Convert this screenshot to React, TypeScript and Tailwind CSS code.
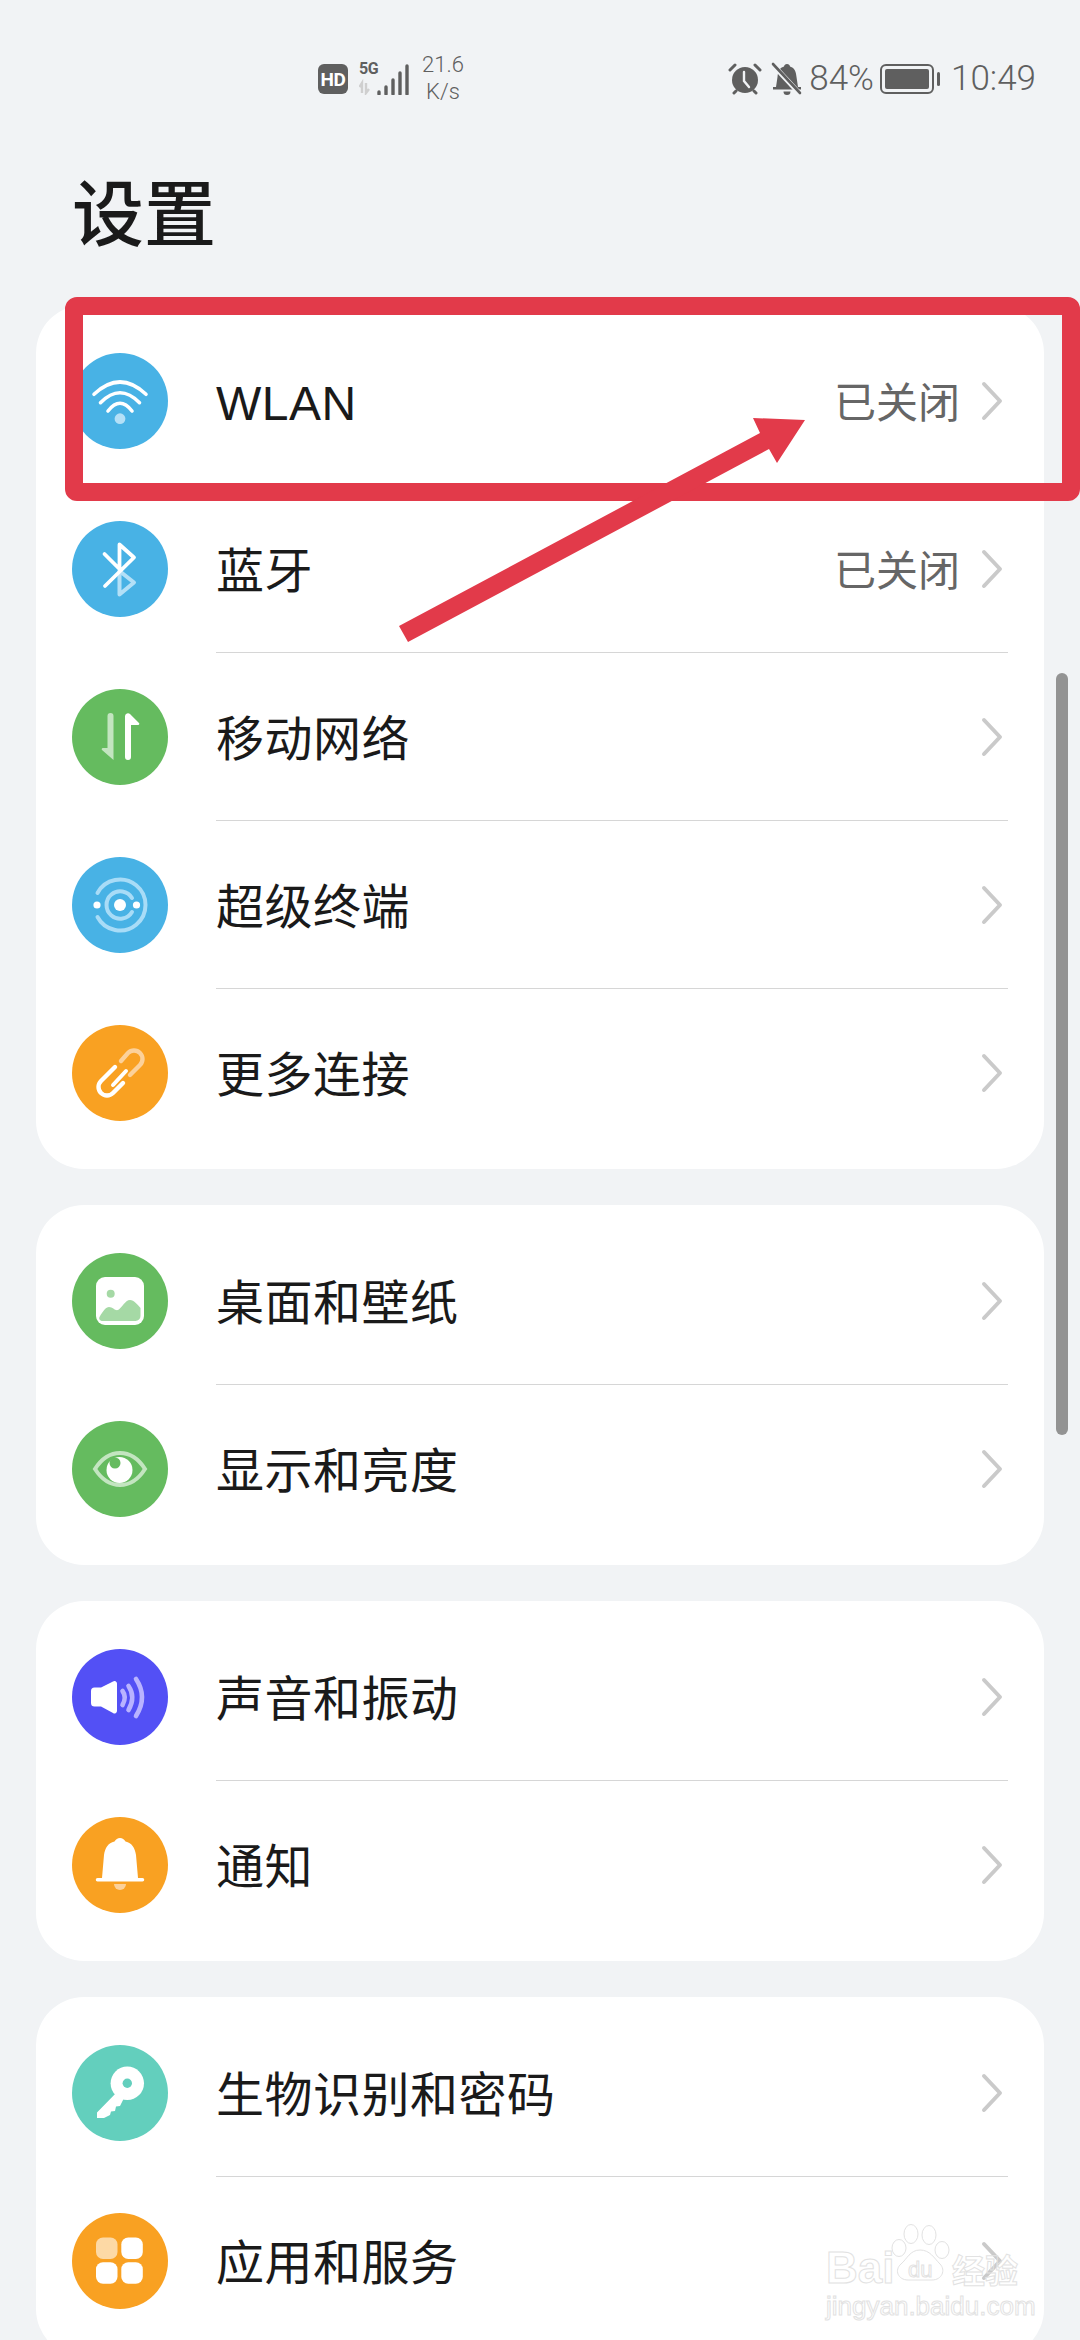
import React from "react";

const FONT = "font-['Noto_Sans_CJK_SC','Noto_Sans',sans-serif]";

function Circle({ bg, children }: { bg: string; children: React.ReactNode }) {
  return (
    <div className={`w-[96px] h-[96px] rounded-full shrink-0 ${bg}`}>
      <svg viewBox="0 0 96 96" width="96" height="96" fill="none">
        {children}
      </svg>
    </div>
  );
}

const Wifi = () => (
  <Circle bg="bg-[#48b2e5]">
    <g stroke="#fff" strokeWidth="3.6" strokeLinecap="round">
      <path d="M22 41.3Q48 16.7 74 41.3" />
      <path d="M28.5 49.7Q48 29.7 67.5 49.7" />
      <path d="M36 58Q48 42.6 60 58" />
    </g>
    <circle cx="48" cy="65.7" r="5.4" fill="#b3e0f7" />
  </Circle>
);
const Bluetooth = () => (
  <Circle bg="bg-[#48b2e5]">
    <path d="M47.5 50V73.500L62 61.500Z" stroke="#b3e0f7" strokeWidth="4" strokeLinejoin="round" />
    <path d="M32.5 33L47.5 48V23.500L62 36.500L33 65" stroke="#fff" strokeWidth="3.800" strokeLinecap="round" strokeLinejoin="round" />
  </Circle>
);
const Mobile = () => (
  <Circle bg="bg-[#65bb5f]">
    <path d="M35.5 27a3 3 0 0 1 6 0v44l-11.5-10a1.2 1.2 0 0 1 .8-2h4.7z" fill="#c3e5c0" />
    <path d="M53 27a3 3 0 0 1 5-2l9 9a1.2 1.2 0 0 1-.8 2H59v32a3 3 0 0 1-6 0z" fill="#fff" />
  </Circle>
);
const Device = () => (
  <Circle bg="bg-[#48b2e5]">
    <g stroke="#a8dcf7" strokeWidth="4" strokeLinecap="round">
      <path d="M25.5 36A25.5 25.5 0 1 1 25.5 60" />
      <path d="M60 41A13.7 13.7 0 1 0 60 55" />
    </g>
    <circle cx="48" cy="48" r="6" fill="#fff" />
    <circle cx="25" cy="48" r="3.6" fill="#fff" />
    <circle cx="64.5" cy="48" r="3.6" fill="#fff" />
  </Circle>
);
const LinkIcon = () => (
  <Circle bg="bg-[#f9a122]">
    <path d="M58 50L68 40a8.300 8.300 0 0 0-12-12L49 36" stroke="#fcd19a" strokeWidth="4.400" strokeLinecap="round" />
    <path d="M43 42L29 56a8.300 8.300 0 0 0 12 12L51 58" stroke="#fff" strokeWidth="4.400" strokeLinecap="round" />
    <path d="M41 60L54 46" stroke="#fff" strokeWidth="4" strokeLinecap="round" />
  </Circle>
);
const Wallpaper = () => (
  <Circle bg="bg-[#65bb5f]">
    <rect x="24" y="24" width="48" height="48" rx="9" fill="#fff" />
    <circle cx="38.7" cy="40.7" r="4" fill="#a5d9a5" />
    <path d="M27.5 64C31 58 34 54 37 54C41 54 43 58 46 57C50 55 53 47 58 47C62 47 66 52 68.5 55V63A5 5 0 0 1 63.5 68H31C28 68 26.5 66 27.5 64Z" fill="#a5d9a5" />
  </Circle>
);
const Eye = () => (
  <Circle bg="bg-[#65bb5f]">
    <path d="M23 48C30 37 38 32 48 32C58 32 66 37 73 48C66 59 58 64 48 64C38 64 30 59 23 48Z" stroke="#c3e5c0" strokeWidth="4" />
    <circle cx="47.5" cy="49" r="13" fill="#fff" />
    <circle cx="43" cy="42" r="5.5" fill="#65bb5f" />
  </Circle>
);
const Sound = () => (
  <Circle bg="bg-[#5350f5]">
    <path d="M19 42a3.5 3.5 0 0 1 3.5-3.5H29L41 32.5a2.5 2.5 0 0 1 4 2V62a2.5 2.5 0 0 1-4 2L29 57.500H22.500a3.500 3.500 0 0 1-3.500-3.500z" fill="#fff" />
    <g stroke="#b9b3ff" strokeWidth="4.600" strokeLinecap="round">
      <path d="M50.500 42Q55 48 50.500 56" />
      <path d="M56.500 37Q64 48 56.500 61" />
      <path d="M64 30Q76 48 64 67" />
    </g>
  </Circle>
);
const Bell = () => (
  <Circle bg="bg-[#f9a122]">
    <path d="M42 67h12a6 6 0 0 1-12 0z" fill="#fcd19a" />
    <path d="M48 21C50.500 21 52 22.500 53.500 24.500C60 26 63 31 64 38L66 61H70.500a1.700 1.700 0 0 1 0 3.500H25.500a1.700 1.700 0 0 1 0-3.500H30L32 38C33 31 36 26 42.500 24.500C44 22.500 45.500 21 48 21Z" fill="#fff" />
  </Circle>
);
const Key = () => (
  <Circle bg="bg-[#63cfbd]">
    <path d="M46 46L25 67.500V73H32L38 70L39 66.500L43 66L44 61.500L48 61L53 51Z" fill="#fff" />
    <circle cx="55.300" cy="38.300" r="16.700" fill="#fff" />
    <circle cx="55.300" cy="38.300" r="4.700" fill="#63cfbd" />
  </Circle>
);
const Apps = () => (
  <Circle bg="bg-[#f9a122]">
    <rect x="24" y="24.500" width="21.500" height="21.500" rx="7" fill="#fdd9a5" />
    <rect x="49.300" y="24.500" width="21.500" height="21.500" rx="7" fill="#fff" />
    <rect x="24" y="49.300" width="21.500" height="21.500" rx="7" fill="#fff" />
    <rect x="49.300" y="49.300" width="21.500" height="21.500" rx="7" fill="#fff" />
  </Circle>
);

const Chevron = () => (
  <svg width="22" height="40" viewBox="0 0 22 40" fill="none" className="shrink-0">
    <path d="M3 3L19 20L3 37" stroke="#cacaca" strokeWidth="4" strokeLinecap="round" strokeLinejoin="round" />
  </svg>
);

function Row({ icon, label, value, last }: { icon: React.ReactNode; label: string; value?: string; last?: boolean }) {
  return (
    <div className="flex items-center h-[168px] pl-[36px] pr-[36px]">
      {icon}
      <div className={`flex-1 h-full ml-[48px] flex items-center pr-[5px] ${last ? "" : "border-b-[1.5px] border-[#d6d6d6]"}`}>
        <span className="flex-1 pt-[6px] text-[48px] leading-[60px] tracking-[0.5px] text-[#1a1a1a] font-['Liberation_Sans','Noto_Sans_CJK_SC',sans-serif]">{label}</span>
        {value && <span className="pb-[2px] text-[42px] leading-[50px] text-[#666666] mr-[21px]">{value}</span>}
        <Chevron />
      </div>
    </div>
  );
}

function Card({ children }: { children: React.ReactNode }) {
  return <div className="bg-white rounded-[48px] py-[12px] mx-[36px] mb-[36px]">{children}</div>;
}

function StatusBar() {
  return (
    <div className="h-[158px] flex items-center pl-[318px] pr-[44px] text-[#5f5f5f] font-['Roboto',sans-serif] font-light">
      <div className="w-[30px] h-[30px] rounded-[6px] bg-[#5f5f5f] text-white text-[19px] font-bold flex items-center justify-center leading-none tracking-[-0.5px]">HD</div>
      <div className="ml-[11px] w-[52px] h-[32px] relative">
        <span className="absolute left-0 top-[-3px] text-[16px] font-bold leading-[18px] tracking-[-0.5px]">5G</span>
        <svg viewBox="0 0 52 32" width="52" height="32" className="absolute left-0 top-0" fill="none">
          <path d="M3 30V20L0.500 24M7 20V30L10 26" stroke="#cfcfcf" strokeWidth="2.400" />
          <g stroke="#5f5f5f" strokeWidth="3.400" strokeLinecap="round">
            <path d="M20 31V29" />
            <path d="M27 31V24" />
            <path d="M34 31V17" />
            <path d="M41 31V10" />
            <path d="M48 31V3" />
          </g>
        </svg>
      </div>
      <div className="ml-[8px] w-[48px] flex flex-col items-center text-[22px] leading-[27px] pb-[2px]">
        <span>21.6</span>
        <span>K/s</span>
      </div>
      <div className="flex-1" />
      <svg viewBox="0 0 34 34" width="34" height="34" fill="none" className="shrink-0">
        <circle cx="17" cy="18" r="13" fill="#5f5f5f" />
        <path d="M16 10V19L21 25" stroke="#f1f3f5" strokeWidth="2.400" strokeLinecap="round" />
        <path d="M2 8L7 3M32 8L27 3M6 31L8 29M28 31L26 29" stroke="#5f5f5f" strokeWidth="3" strokeLinecap="round" />
      </svg>
      <svg viewBox="0 0 34 34" width="34" height="34" fill="none" className="ml-[8px] shrink-0">
        <path d="M17 2C19 2 20 3.500 20 4.500C25 6 26 10 26.500 15L28 25H31V27.500H3V25H6L7.500 15C8 10 9 6 14 4.500C14 3.500 15 2 17 2Z" fill="#5f5f5f" />
        <path d="M13.500 29.500h7a3.500 3.500 0 0 1-7 0z" fill="#5f5f5f" />
        <path d="M3 3L30 32" stroke="#f1f3f5" strokeWidth="5" />
        <path d="M3 2L30 31" stroke="#5f5f5f" strokeWidth="2.600" strokeLinecap="round" />
      </svg>
      <span className="ml-[5px] text-[35px] leading-[40px]">84%</span>
      <div className="ml-[6px] flex items-center shrink-0">
        <div className="w-[54px] h-[30px] rounded-[6px] border-2 border-[#5f5f5f] p-[3px]">
          <div className="w-full h-full rounded-[2px] bg-[#5f5f5f]" />
        </div>
        <div className="w-[3px] h-[14px] ml-[3px] rounded-[2px] bg-[#5f5f5f]" />
      </div>
      <span className="ml-[11px] text-[35px] leading-[40px]">10:49</span>
    </div>
  );
}

function Watermark() {
  const outline = "text-transparent [-webkit-text-stroke:1px_#e2e2e2] font-['Liberation_Sans',sans-serif]";
  return (
    <div className="absolute left-[826px] top-[2222px] w-[200px] h-[96px]">
      <svg viewBox="0 0 100 70" width="100" height="70" className="absolute left-[50px] top-[-2px]" fill="none" stroke="#e2e2e2" strokeWidth="1">
        <ellipse cx="23" cy="28" rx="7" ry="8.500" />
        <ellipse cx="35" cy="14" rx="7" ry="9.500" />
        <ellipse cx="53" cy="15" rx="7" ry="9.500" />
        <ellipse cx="66" cy="30" rx="7" ry="8.500" />
        <path d="M44 30C54 30 58 38 64 44C70 50 66 60 56 60H32C22 60 18 50 25 44C31 39 34 30 44 30Z" />
      </svg>
      <span className={`absolute left-0 top-[24px] text-[44px] leading-[44px] font-bold ${outline}`}>Bai</span>
      <span className={`absolute left-[82px] top-[36px] text-[22px] leading-[24px] ${outline}`}>du</span>
      <span className="absolute left-[126px] top-[28px] text-[33px] leading-[38px] font-['Noto_Sans_CJK_SC',sans-serif] font-bold text-transparent [-webkit-text-stroke:1px_#e2e2e2]">经验</span>
      <span className={`absolute left-0 top-[70px] text-[26px] leading-[28px] w-[200px] whitespace-nowrap ${outline}`}>jingyan.baidu.com</span>
    </div>
  );
}

function Annotation() {
  return (
    <svg viewBox="0 0 1080 2340" width="1080" height="2340" className="absolute inset-0" fill="none">
      <rect x="74" y="306" width="997" height="186" rx="3" stroke="#e23a4a" strokeWidth="18" />
      <path d="M399 626L760 433L753 418L805 420L777 463L769 449L408 642Z" fill="#e23a4a" />
    </svg>
  );
}

export default function App() {
  return (
    <div className={`relative w-[1080px] h-[2340px] overflow-hidden bg-[#f1f3f5] ${FONT}`}>
      <StatusBar />
      <div className="h-[147px] pl-[72px] pt-[15px]">
        <h1 className="text-[72px] leading-[72px] font-medium text-[#1a1a1a]">设置</h1>
      </div>
      <Card>
        <Row icon={<Wifi />} label="WLAN" value="已关闭" last />
        <Row icon={<Bluetooth />} label="蓝牙" value="已关闭" />
        <Row icon={<Mobile />} label="移动网络" />
        <Row icon={<Device />} label="超级终端" />
        <Row icon={<LinkIcon />} label="更多连接" last />
      </Card>
      <Card>
        <Row icon={<Wallpaper />} label="桌面和壁纸" />
        <Row icon={<Eye />} label="显示和亮度" last />
      </Card>
      <Card>
        <Row icon={<Sound />} label="声音和振动" />
        <Row icon={<Bell />} label="通知" last />
      </Card>
      <Card>
        <Row icon={<Key />} label="生物识别和密码" />
        <Row icon={<Apps />} label="应用和服务" last />
      </Card>
      <div className="absolute left-[1056px] top-[673px] w-[12px] h-[762px] rounded-full bg-[#939393]" />
      <Annotation />
      <Watermark />
    </div>
  );
}
